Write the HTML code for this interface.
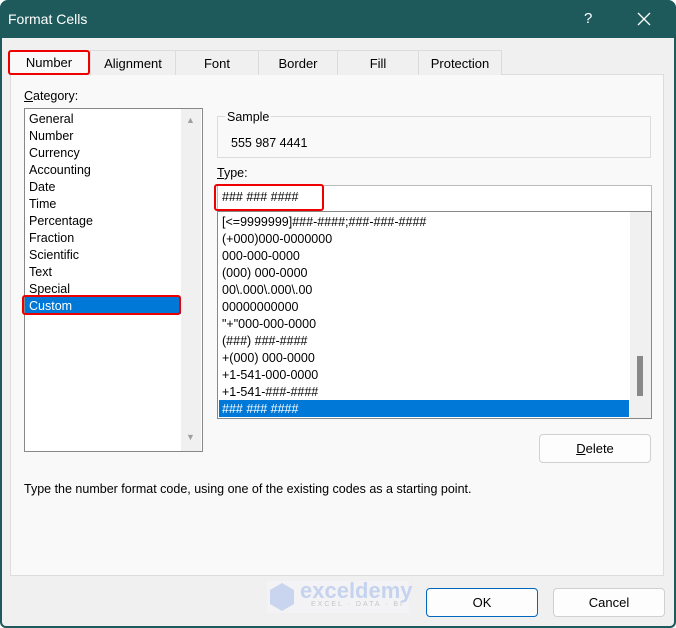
<!DOCTYPE html>
<html><head><style>
*{margin:0;padding:0;box-sizing:border-box}
body{width:676px;height:628px;overflow:hidden;font-family:"Liberation Sans",sans-serif;font-size:12.5px;color:#000;background:#fff}
.win{position:absolute;left:0;top:0;width:676px;height:628px;background:#f0f0f0;border-radius:8px 8px 6px 6px;overflow:hidden}
.edge{position:absolute;left:0;top:0;width:676px;height:628px;border:2px solid #1e5a5c;border-top:none;border-radius:8px 8px 6px 6px;pointer-events:none}
.title{position:absolute;left:0;top:0;width:676px;height:38px;background:#1e5a5c;color:#fff;font-size:14px}
.abs{position:absolute}
.tab{position:absolute;top:50px;height:25px;background:#f0f0f0;border:1px solid #dcdcdc;border-bottom:none;text-align:center;line-height:25px;font-size:13px}
.panel{position:absolute;left:10px;top:74px;width:654px;height:502px;background:#f9f9f9;border:1px solid #dcdcdc}
.li{position:absolute;font-size:12.5px;white-space:nowrap}
.btn{position:absolute;background:#fdfdfd;border:1px solid #d0d0d0;border-radius:4px;text-align:center;font-size:13px}
</style></head><body>
<div class="win">
<div class="title"><span class="abs" style="left:8px;top:11px">Format Cells</span><span class="abs" style="left:584px;top:10px;font-size:15px">?</span>
<svg class="abs" style="left:637px;top:12px" width="14" height="14"><path d="M1 1L13 13M13 1L1 13" stroke="#fff" stroke-width="1.3"/></svg></div>
<div class="panel"></div>
<div class="tab" style="left:8px;width:82px;background:#f9f9f9;border:2px solid #e00;border-radius:3px;line-height:22px">Number</div>
<div class="tab" style="left:90px;width:86px">Alignment</div>
<div class="tab" style="left:175px;width:84px">Font</div>
<div class="tab" style="left:258px;width:80px">Border</div>
<div class="tab" style="left:337px;width:82px">Fill</div>
<div class="tab" style="left:418px;width:84px">Protection</div>
<div class="li" style="left:24px;top:89px"><u>C</u>ategory:</div>
<div class="abs" style="left:24px;top:108px;width:179px;height:344px;background:#fff;border:1px solid #888"></div>
<div class="abs" style="left:181px;top:109px;width:20px;height:342px;background:#f0f0f0"></div>
<div class="abs" style="left:186px;top:115px;color:#a0a0a0;font-size:9px">▲</div>
<div class="abs" style="left:186px;top:432px;color:#a0a0a0;font-size:9px">▼</div>
<div class="li" style="left:29px;top:112px">General</div>
<div class="li" style="left:29px;top:129px">Number</div>
<div class="li" style="left:29px;top:146px">Currency</div>
<div class="li" style="left:29px;top:163px">Accounting</div>
<div class="li" style="left:29px;top:180px">Date</div>
<div class="li" style="left:29px;top:197px">Time</div>
<div class="li" style="left:29px;top:214px">Percentage</div>
<div class="li" style="left:29px;top:231px">Fraction</div>
<div class="li" style="left:29px;top:248px">Scientific</div>
<div class="li" style="left:29px;top:265px">Text</div>
<div class="li" style="left:29px;top:282px">Special</div>
<div class="abs" style="left:25px;top:297px;width:156px;height:17px;background:#0078d7"></div>
<div class="abs" style="left:22px;top:295px;width:159px;height:20px;border:2px solid #e00;border-radius:3px"></div>
<div class="li" style="left:29px;top:299px;color:#fff">Custom</div>
<div class="abs" style="left:217px;top:116px;width:434px;height:42px;border:1px solid #dcdcdc"></div>
<div class="li" style="left:225px;top:110px;background:#f9f9f9;padding:0 2px">Sample</div>
<div class="li" style="left:231px;top:136px">555 987 4441</div>
<div class="li" style="left:217px;top:166px"><u>T</u>ype:</div>
<div class="abs" style="left:217px;top:185px;width:435px;height:27px;background:#fff;border:1px solid #bbb"></div>
<div class="abs" style="left:214px;top:184px;width:110px;height:27px;border:2px solid #e00;border-radius:3px"></div>
<div class="li" style="left:222px;top:190px">### ### ####</div>
<div class="abs" style="left:217px;top:211px;width:435px;height:208px;background:#fff;border:1px solid #888"></div>
<div class="abs" style="left:630px;top:212px;width:21px;height:206px;background:#f0f0f0"></div>
<div class="abs" style="left:637px;top:356px;width:6px;height:40px;background:#888"></div>
<div class="li" style="left:222px;top:215px">[&lt;=9999999]###-####;###-###-####</div>
<div class="li" style="left:222px;top:232px">(+000)000-0000000</div>
<div class="li" style="left:222px;top:249px">000-000-0000</div>
<div class="li" style="left:222px;top:266px">(000) 000-0000</div>
<div class="li" style="left:222px;top:283px">00\.000\.000\.00</div>
<div class="li" style="left:222px;top:300px">00000000000</div>
<div class="li" style="left:222px;top:317px">"+"000-000-0000</div>
<div class="li" style="left:222px;top:334px">(###) ###-####</div>
<div class="li" style="left:222px;top:351px">+(000) 000-0000</div>
<div class="li" style="left:222px;top:368px">+1-541-000-0000</div>
<div class="li" style="left:222px;top:385px">+1-541-###-####</div>
<div class="abs" style="left:219px;top:400px;width:410px;height:17px;background:#0078d7"></div>
<div class="li" style="left:222px;top:402px;color:#fff">### ### ####</div>
<div class="btn" style="left:539px;top:434px;width:112px;height:29px;line-height:27px"><u>D</u>elete</div>
<div class="li" style="left:24px;top:482px">Type the number format code, using one of the existing codes as a starting point.</div>
<div class="abs" style="left:267px;top:581px;width:142px;height:32px;background:#f3f3f5"></div>
<div class="abs" style="left:270px;top:583px;width:24px;height:28px;background:#c9d5ee;clip-path:polygon(50% 0,100% 25%,100% 75%,50% 100%,0 75%,0 25%)"></div>
<div class="li" style="left:300px;top:578px;font-size:22px;font-weight:bold;color:#c6d3ee">exceldemy</div>
<div class="li" style="left:311px;top:601px;font-size:7px;letter-spacing:2px;color:#c6c6c6">EXCEL · DATA · BI</div>
<div class="btn" style="left:426px;top:588px;width:112px;height:29px;line-height:27px;border-color:#0067c0">OK</div>
<div class="btn" style="left:553px;top:588px;width:112px;height:29px;line-height:27px">Cancel</div>
</div>
<div class="edge"></div>
</body></html>
